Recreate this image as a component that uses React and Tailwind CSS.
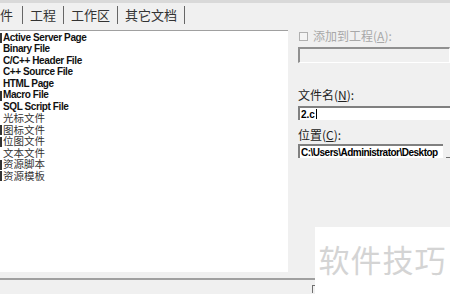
import React from 'react';

const items = [
  { label: 'Active Server Page', bold: true, mark: true },
  { label: 'Binary File', bold: true },
  { label: 'C/C++ Header File', bold: true },
  { label: 'C++ Source File', bold: true },
  { label: 'HTML Page', bold: true },
  { label: 'Macro File', bold: true, mark: true },
  { label: 'SQL Script File', bold: true },
  { label: '光标文件' },
  { label: '图标文件', mark: true },
  { label: '位图文件', mark: true },
  { label: '文本文件' },
  { label: '资源脚本', mark: true },
  { label: '资源模板', mark: true },
];

const tabs = ['工程', '工作区', '其它文档'];
const cjk = { fontFamily: '"Noto Sans CJK SC", sans-serif' };

function Label({ text, hot }) {
  return (
    <span>
      {text}(<span className="underline">{hot}</span>):
    </span>
  );
}

export default function App() {
  return (
    <div
      className="relative w-[450px] h-[294px] overflow-hidden bg-[#f0f0f0] text-black"
      style={{ fontFamily: '"Liberation Sans", "Noto Sans CJK SC", sans-serif' }}
    >
      {/* tab strip */}
      <div className="h-[30px] flex items-center pb-[4px] text-[13px] text-[#333] border-t-[3px] border-[#d9d9d9]">
        <span className="pr-[9px]" style={cjk}>件</span>
        {tabs.map(t => (
          <span key={t} className="border-l border-[#666] h-[18px] leading-[18px] px-[7px]" style={cjk}>
            {t}
          </span>
        ))}
        <span className="border-l border-[#666] h-[18px]" />
      </div>

      <div className="flex">
        {/* file type list */}
        <div className="shrink-0 w-[288px] h-[242px] bg-white border-t border-[#a0a0a0] pt-[1px]">
          {items.map(it => (
            <div key={it.label} className="h-[11.5px] flex items-center relative overflow-visible">
              {it.mark && <span className="absolute left-0 top-[1px] w-[2px] h-[10px] bg-[#333]" />}
              <span
                className={
                  it.bold
                    ? 'pl-[3px] text-[10px] font-bold leading-[10px] tracking-[-0.4px] text-[#111] whitespace-nowrap'
                    : 'pl-[3px] text-[10.5px] leading-[10px] text-[#333] whitespace-nowrap'
                }
                style={it.bold ? {} : cjk}
              >
                {it.label}
              </span>
            </div>
          ))}
        </div>

        {/* right side form */}
        <div className="flex-1 min-w-0 pl-[10px] text-[12px]">
          <div className="flex items-center h-[14px] -mt-[1px] text-[#a8a8a8] whitespace-nowrap" style={cjk}>
            <span className="w-[9px] h-[9px] border border-[#b0b0b0] bg-[#f4f4f4] mr-[5px] ml-[1px]" />
            <Label text="添加到工程" hot="A" />
          </div>
          <div className="mt-[4px] h-[16px] w-[152px] border-t-2 border-l-2 border-[#909090] border-b border-r border-b-white border-r-white bg-[#f0f0f0]" />

          <div className="mt-[25px] h-[14px] leading-[14px] text-[#222]" style={cjk}>
            <Label text="文件名" hot="N" />
          </div>
          <div className="mt-[4px] h-[14px] w-[152px] bg-white border-t-2 border-l-2 border-[#808080] flex items-center pl-[1px] text-[10px] font-bold">
            2.c<span className="w-px h-[10px] bg-black ml-px" />
          </div>

          <div className="mt-[8px] h-[14px] leading-[14px] text-[#222]" style={cjk}>
            <Label text="位置" hot="C" />
          </div>
          <div className="flex items-end mt-[2px]">
            <div className="shrink-0 h-[14px] w-[145px] bg-white border-t-2 border-l-2 border-[#808080] flex items-center pl-[1px] text-[10px] font-bold tracking-[-0.5px] whitespace-nowrap overflow-hidden">
              C:\Users\Administrator\Desktop
            </div>
            <span className="ml-[3px] w-[4px] h-[5px] border-b border-[#707070]" />
          </div>
        </div>
      </div>

      {/* bottom separator */}
      <div className="mt-[6px] border-t-2 border-[#a0a0a0]" />
      <div className="ml-[312px] mt-[5px] w-[4px] h-[8px] border-l border-t border-[#707070]" />

      {/* watermark */}
      <div className="absolute left-[315px] top-[227px] w-[135px] h-[67px] bg-white flex items-center justify-center">
        <span className="text-[31px] text-[#d4d4d4] tracking-[1px] -mt-[2px]" style={cjk}>
          软件技巧
        </span>
      </div>
    </div>
  );
}
